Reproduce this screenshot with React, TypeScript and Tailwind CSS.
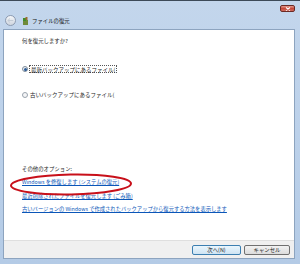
import React from "react";

const font = { fontFamily: '"Noto Sans CJK JP", "Noto Sans", sans-serif' };

export default function App() {
  return (
    <div
      className="relative w-[300px] h-[264px] overflow-hidden border-t border-[#3d4a58] bg-gradient-to-b from-[#c3d6ec] via-[#bcd1ea] to-[#b4cbe6] text-[#1e1e1e]"
      style={font}
    >
      {/* title bar */}
      <div className="h-[28px] flex flex-col">
        <div className="flex justify-end pr-[5px] pt-[4px]">
          <div className="w-[15px] h-[7px] rounded-[2px] border border-[#6b2a25] bg-gradient-to-b from-[#e49a8f] via-[#c6493c] to-[#cf6a5d] flex items-center justify-center">
            <svg width="6" height="4" viewBox="0 0 6 4">
              <path d="M1 0.5 L5 3.5 M5 0.5 L1 3.5" stroke="#fff" strokeWidth="1.1" />
            </svg>
          </div>
        </div>
        <div className="flex items-center pl-[5px] mt-[3px] h-[11px]">
          <div className="w-[11px] h-[11px] rounded-full border border-[#8d9bb0] bg-gradient-to-b from-[#f4f6f9] to-[#cfd6df] flex items-center justify-center">
            <svg width="7" height="5" viewBox="0 0 7 5">
              <path d="M3 0.5 L0.8 2.5 L3 4.5 M0.8 2.5 H6.3" stroke="#c4ccd6" strokeWidth="1" fill="none" />
            </svg>
          </div>
          <svg className="ml-[6px]" width="7" height="8" viewBox="0 0 7 8">
            <rect x="1" y="3" width="5" height="5" fill="#6f8a3a" />
            <rect x="1" y="1" width="3" height="3" fill="#3f8d2a" />
            <rect x="3.5" y="0" width="2" height="3" fill="#9c6b30" />
          </svg>
          <span className="ml-[3px] text-[5.4px] leading-[8px] text-[#111]">ファイルの復元</span>
        </div>
      </div>

      {/* panel */}
      <div className="ml-[3px] mr-[5px] h-[230px] border border-[#8da4bf] bg-white flex flex-col">
        <div className="flex-1 flex flex-col pl-[18px] pt-[7px] text-[5.4px] leading-[8px]">
          <div className="h-[8px]">何を復元しますか?</div>
          <div className="mt-[20px] h-[8px] flex items-center text-[5.5px]">
            <span className="w-[6px] h-[6px] rounded-full border border-[#7f8b99] bg-[#eef1f4] flex items-center justify-center">
              <span className="w-[3px] h-[3px] rounded-full bg-[#2a5a96]" />
            </span>
            <span className="ml-[1px] px-[1px] h-[8px] border border-dotted border-[#555]">最新バックアップにあるファイル(</span>
          </div>
          <div className="mt-[18px] h-[8px] flex items-center text-[5.5px]">
            <span className="w-[6px] h-[6px] rounded-full border border-[#9aa3ad] bg-[#f4f5f7]" />
            <span className="ml-[2px] h-[8px]">古いバックアップにあるファイル(</span>
          </div>
          <div className="mt-[66px] h-[8px]">その他のオプション:</div>
          <div className="mt-[5px] h-[8px] text-[#0b56b8] underline text-[5.3px]">Windows を修復します (システムの復元)</div>
          <div className="mt-[6px] h-[8px] text-[#0b56b8] underline text-[5.3px]">最近削除されたファイルを復元します (ごみ箱)</div>
          <div className="mt-[5px] h-[8px] text-[#0b56b8] underline text-[5.3px]">古いバージョンの Windows で作成されたバックアップから復元する方法を表示します</div>
        </div>
        <div className="h-[18px] bg-[#f0f0f0] border-t border-[#dfdfdf] flex justify-end items-start pt-[4px] pr-[4px] gap-[3px]">
          <div className="w-[49px] h-[10px] rounded-[2px] border border-[#3c7fb1] bg-gradient-to-b from-[#eaf6fd] to-[#cfe4f3] text-[5.4px] leading-[8px] text-center">次へ(N)</div>
          <div className="w-[46px] h-[10px] rounded-[2px] border border-[#707070] bg-gradient-to-b from-[#f2f2f2] to-[#dcdcdc] text-[5.4px] leading-[8px] text-center">キャンセル</div>
        </div>
      </div>

      {/* red annotation ellipse */}
      <svg className="absolute left-[8px] top-[171px]" width="126" height="25" viewBox="0 0 126 25">
        <ellipse cx="63" cy="12.5" rx="60" ry="10" fill="none" stroke="#c8101a" strokeWidth="2" transform="rotate(-1 63 12.5)" />
      </svg>
    </div>
  );
}
